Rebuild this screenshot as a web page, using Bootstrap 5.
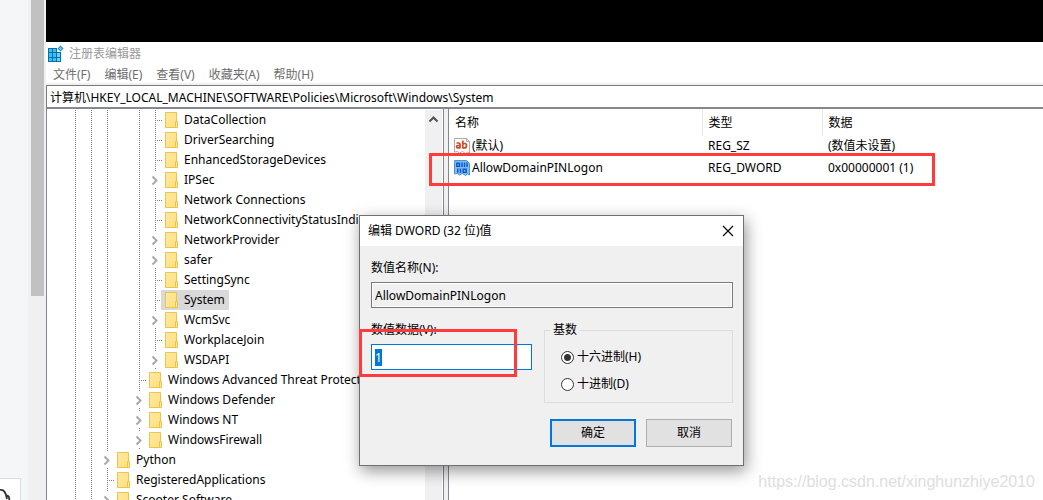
<!DOCTYPE html>
<html lang="zh-CN">
<head>
<meta charset="utf-8">
<meta name="viewport" content="width=device-width, initial-scale=1">
<title>注册表编辑器</title>
<link rel="stylesheet" href="https://cdn.jsdelivr.net/npm/bootstrap@5.3.0/dist/css/bootstrap.min.css">
<style>
body{font:12px/20px "Noto Sans","Noto Sans CJK SC",sans-serif;color:#000;background:#fff}
.desk{height:100vh}
.host-side{width:28px;background:#f5f6f8}
.host-chip{width:21px;height:22px;background:#fff;border:1px solid #ddd;border-left:0;border-bottom:0;overflow:hidden}
.host-scroll{width:18px;background:#f0f0f0;padding:0 2px 0 3px}
.host-thumb{height:296px;background:#c1c1c1}
.host-top{height:42px;background:#000}
.app-title{height:23px;color:#999;padding:0 2px;gap:5px}
.app-menu{height:18px;gap:14px;padding:0 7px}
.app-menu a{color:#6d6d6d;text-decoration:none;line-height:20px}
.addr-wrap{background:#f0f0f0;padding-top:2px}
.addr{display:block;width:100%;height:24px;border:1px solid #7a7a7a;border-right:0;border-bottom:2px solid #828790;padding:0 3px;outline:0;background:#fff;color:#000}
.tree-pane{width:398px;border-left:1px solid #828790;border-right:1px solid #828790;padding-top:1px}
.tree{padding-left:20px}
.tree-row{height:20px;white-space:nowrap}
.cell{width:16px;height:20px;flex:none}
.v,.t{background:repeating-linear-gradient(#808080 0 1px,#fff 1px 2px) 8px 0/1px 100% no-repeat}
.t{background:repeating-linear-gradient(#808080 0 1px,#fff 1px 2px) 8px 0/1px 100% no-repeat,repeating-linear-gradient(90deg,#808080 0 1px,#fff 1px 2px) 8px 10px/8px 1px no-repeat}
.x{background:linear-gradient(#808080,#808080) 8px 0/1px 1px no-repeat,linear-gradient(#808080,#808080) 8px 18px/1px 1px no-repeat}
.x svg,.tree-name svg{display:block;flex:none}
.tree-name{gap:5px;padding:0 4px 0 2px;margin-left:-2px}
.tree-name.chosen{background:#d9d9d9}
.tree-scroll{width:17px;background:#f0f0f0;margin-right:1px}
.splitter{width:5px;background:#f0f0f0;border-right:1px solid #828790}
.values{table-layout:fixed;width:100%;margin-top:1px}
.values th{font-weight:400;height:25px;padding:0 6px;border-right:1px solid #e5e5e5}
.values th:last-child{border-right:0}
.values td{padding:0 6px;height:22px;white-space:nowrap}
.values td:first-child{padding-left:5px}
.c-name{width:253px}.c-kind{width:120px}
.value-name{gap:2px}
.hint{border:3px solid #ff3b3b;pointer-events:none}
.hint-value{left:429px;top:153px;width:506px;height:33px}
.hint-data{left:-1px;top:113px;width:158px;height:48px}
.dlg{left:359px;top:215px;width:385px;background:#f0f0f0;border:1px solid #707070;box-shadow:2px 5px 15px rgba(0,0,0,.42)}
.dlg-title{height:30px;background:#fff;padding:0 8px}
.dlg-title button,.dlg-foot button{border-radius:0;line-height:20px}
.dlg-body{padding:12px 10px 18px 11px}
.field{display:block;width:100%;height:26px;border:1px solid #7a7a7a;padding:0 3px;line-height:22px;background:#f0f0f0;box-shadow:inset 0 0 0 1px #fff;outline:0}
.field-data{width:161px;background:#fff;border:1px solid #0078d7}
.field-data::selection{background:#0078d7;color:#fff}
.lbl{display:block;height:20px;margin-bottom:4px}
.radix{width:189px;height:83px;border:1px solid #dcdcdc;padding:0 16px}
.radix legend{float:none;width:auto;font-size:12px;line-height:20px;padding:0 3px;margin:0 0 0 -11px;background:#f0f0f0}
.radix label{gap:3px;height:20px;margin-top:7px}
.radix input{appearance:none;width:13px;height:13px;margin:0;border:1px solid #333;border-radius:50%;background:#fff}
.radix input:checked{background:radial-gradient(circle,#333 0 3px,#fff 4px)}
.dlg-foot{gap:10px;margin-top:16px;padding-right:1px}
.dlg-foot button{width:86px;height:28px;background:#e1e1e1;border:1px solid #adadad;padding:0;font-size:12px;color:#000}
.dlg-foot .main-btn{border:2px solid #0078d7}
.watermark{right:8px;bottom:7px;font:16px/22px "Liberation Sans",sans-serif;color:#dedede}
</style>
</head>
<body class="overflow-hidden">
<svg width="0" height="0" class="position-absolute" aria-hidden="true">
<defs>
<linearGradient id="fg" x1="0" y1="0" x2="1" y2="1"><stop offset="0" stop-color="#ffe9a2"/><stop offset="1" stop-color="#ffdf7e"/></linearGradient>
<symbol id="folder" viewBox="0 0 16 16"><path d="M2.500.5h11v15h-11z" fill="url(#fg)" stroke="#e9c54b"/><path d="M12.500 9.500h2v6h-2z" fill="#ffe69a" stroke="#e9c54b"/></symbol>
<symbol id="chev" viewBox="0 0 16 20"><path d="M5.500 6.500l4 4-4 4" fill="none" stroke="#a9a9a9" stroke-width="2"/></symbol>
</defs>
</svg>
<div class="desk d-flex position-relative overflow-hidden">
  <aside class="host-side d-flex flex-column justify-content-end flex-shrink-0">
    <div class="host-chip"><svg width="20" height="22" aria-hidden="true"><path d="M0 11C4 10 6 14 7 20M6 17c2-1 4 1 3 5" fill="none" stroke="#333" stroke-width="1.800"/></svg></div>
  </aside>
  <div class="host-scroll flex-shrink-0"><div class="host-thumb"></div></div>
  <main class="d-flex flex-column flex-grow-1 overflow-hidden">
    <div class="host-top flex-shrink-0"></div>
    <header class="app-title d-flex align-items-center flex-shrink-0">
      <svg width="16" height="17" viewBox="0 0 16 17" aria-hidden="true"><path d="M0 3h9v4h4v10H0z" fill="#0a6fae"/><path d="M1 4h3v3H1zM5 4h3v3H5zM1 8h3v4H1zM5 8h3v4H5zM1 13h3v3H1zM5 13h3v3H5z" fill="#38c0f2"/><path d="M9 8h3v4H9zM9 13h3v3H9z" fill="#62d4fa"/><path d="M12.500.5l3 3-3 3-3-3z" fill="#1a8fc9"/><path d="M12.500 2l1.500 1.500L12.500 5 11 3.500z" fill="#7ad3f5"/></svg>
      <span>注册表编辑器</span>
    </header>
    <nav class="app-menu d-flex flex-shrink-0">
      <a href="#">文件(F)</a><a href="#">编辑(E)</a><a href="#">查看(V)</a><a href="#">收藏夹(A)</a><a href="#">帮助(H)</a>
    </nav>
    <div class="addr-wrap flex-shrink-0"><input class="addr" aria-label="地址" value="计算机\HKEY_LOCAL_MACHINE\SOFTWARE\Policies\Microsoft\Windows\System"></div>
    <div class="d-flex flex-grow-1 overflow-hidden">
      <section class="tree-pane d-flex flex-shrink-0 overflow-hidden">
        <div class="tree flex-grow-1 overflow-hidden" id="tree"></div>
        <div class="tree-scroll flex-shrink-0"><svg width="17" height="20" class="d-block" aria-hidden="true"><path d="M4.500 11.500l4-4 4 4" fill="none" stroke="#505050" stroke-width="2"/></svg></div>
      </section>
      <div class="splitter flex-shrink-0"></div>
      <section class="flex-grow-1 overflow-hidden">
        <table class="values">
          <thead><tr><th class="c-name">名称</th><th class="c-kind">类型</th><th>数据</th></tr></thead>
          <tbody>
            <tr><td><div class="value-name d-flex align-items-center"><svg width="16" height="16" viewBox="0 0 16 16" aria-hidden="true"><path d="M.5.500h12l3 3v11.500l-2-1-2 1.500-3-2-3 1.500-2-1.500-3 .500z" fill="#fff" stroke="#aaa"/><path d="M12.500.5v3h3" fill="none" stroke="#aaa"/><g fill="none" stroke="#d24726" stroke-width="1.700"><path d="M2.500 5h2.300q1.200 0 1.200 1.200V10.500M6 7.500H3.700q-1.200 0-1.200 1.200t1.200 1.200H6M8.800 2.500v8M8.800 5.500h2q1.700 0 1.700 2.200t-1.700 2.200h-2"/></g></svg><span>(默认)</span></div></td><td>REG_SZ</td><td>(数值未设置)</td></tr>
            <tr><td><div class="value-name d-flex align-items-center"><svg width="16" height="16" viewBox="0 0 16 16" aria-hidden="true"><path d="M.5.500h12l3 3v11.500l-2-1-2 1.500-3-2-3 1.500-2-1.500-3 .500z" fill="#83bcec" stroke="#4a94d0"/><g fill="none" stroke="#0a5bd0" stroke-width="1.500"><path d="M2.800 3.300h2.700v3H2.800zM8 2.500v4.600M10.500 2.500v4.600M13 2.500v4.600M3.800 8.500v4.300M6.500 8.500v4.300M9.200 9.300h3v3h-3z"/></g></svg><span>AllowDomainPINLogon</span></div></td><td>REG_DWORD</td><td>0x00000001 (1)</td></tr>
          </tbody>
        </table>
      </section>
    </div>
  </main>
  <div class="hint hint-value position-absolute"></div>
  <form class="dlg position-absolute" onsubmit="return false">
    <div class="dlg-title d-flex align-items-center justify-content-between">
      <span>编辑 DWORD (32 位)值</span>
      <button type="button" class="btn p-0 border-0 d-flex" aria-label="关闭"><svg width="13" height="12" viewBox="0 0 13 12" aria-hidden="true"><path d="M1 1l10 10M11 1L1 11" stroke="#000" fill="none" stroke-width="1.100"/></svg></button>
    </div>
    <div class="dlg-body">
      <label class="lbl" for="vname">数值名称(N):</label>
      <input class="field" id="vname" value="AllowDomainPINLogon" readonly>
      <div class="d-flex justify-content-between mt-2 pt-1">
        <div>
          <label class="lbl" for="vdata">数值数据(V):</label>
          <input class="field field-data" id="vdata" value="1">
        </div>
        <fieldset class="radix">
          <legend>基数</legend>
          <label class="d-flex align-items-center"><input type="radio" name="radix" checked>十六进制(H)</label>
          <label class="d-flex align-items-center"><input type="radio" name="radix">十进制(D)</label>
        </fieldset>
      </div>
      <div class="dlg-foot d-flex justify-content-end">
        <button type="submit" class="btn main-btn">确定</button>
        <button type="button" class="btn">取消</button>
      </div>
    </div>
    <div class="hint hint-data position-absolute"></div>
  </form>
  <div class="watermark position-absolute">https://blog.csdn.net/xinghunzhiye2010</div>
</div>
<script src="https://cdn.jsdelivr.net/npm/bootstrap@5.3.0/dist/js/bootstrap.bundle.min.js"></script>
<script>
// Guide cells per row: v = line, e = empty, t = branch, x = expander
const rows = [
  ['vvvevt','DataCollection'],['vvvevt','DriverSearching'],['vvvevt','EnhancedStorageDevices'],
  ['vvvevx','IPSec'],['vvvevt','Network Connections'],['vvvevt','NetworkConnectivityStatusIndicator'],
  ['vvvevx','NetworkProvider'],['vvvevx','safer'],['vvvevt','SettingSync'],['vvvevt','System'],
  ['vvvevx','WcmSvc'],['vvvevt','WorkplaceJoin'],['vvvevx','WSDAPI'],
  ['vvvet','Windows Advanced Threat Protection'],['vvvex','Windows Defender'],['vvvex','Windows NT'],
  ['vvvex','WindowsFirewall'],['vvx','Python'],['vvt','RegisteredApplications'],['vvx','Scooter Software']
];
document.getElementById('tree').innerHTML = rows.map(([cells, name]) =>
  '<div class="tree-row d-flex">' +
  [...cells].map(c => `<span class="cell ${c}">${c === 'x' ? '<svg width="16" height="20"><use href="#chev"/></svg>' : ''}</span>`).join('') +
  `<span class="tree-name d-flex align-items-center${name === 'System' ? ' chosen' : ''}"><svg width="16" height="16"><use href="#folder"/></svg>${name}</span></div>`
).join('');
const data = document.getElementById('vdata');
data.focus();
data.select();
</script>
</body>
</html>
